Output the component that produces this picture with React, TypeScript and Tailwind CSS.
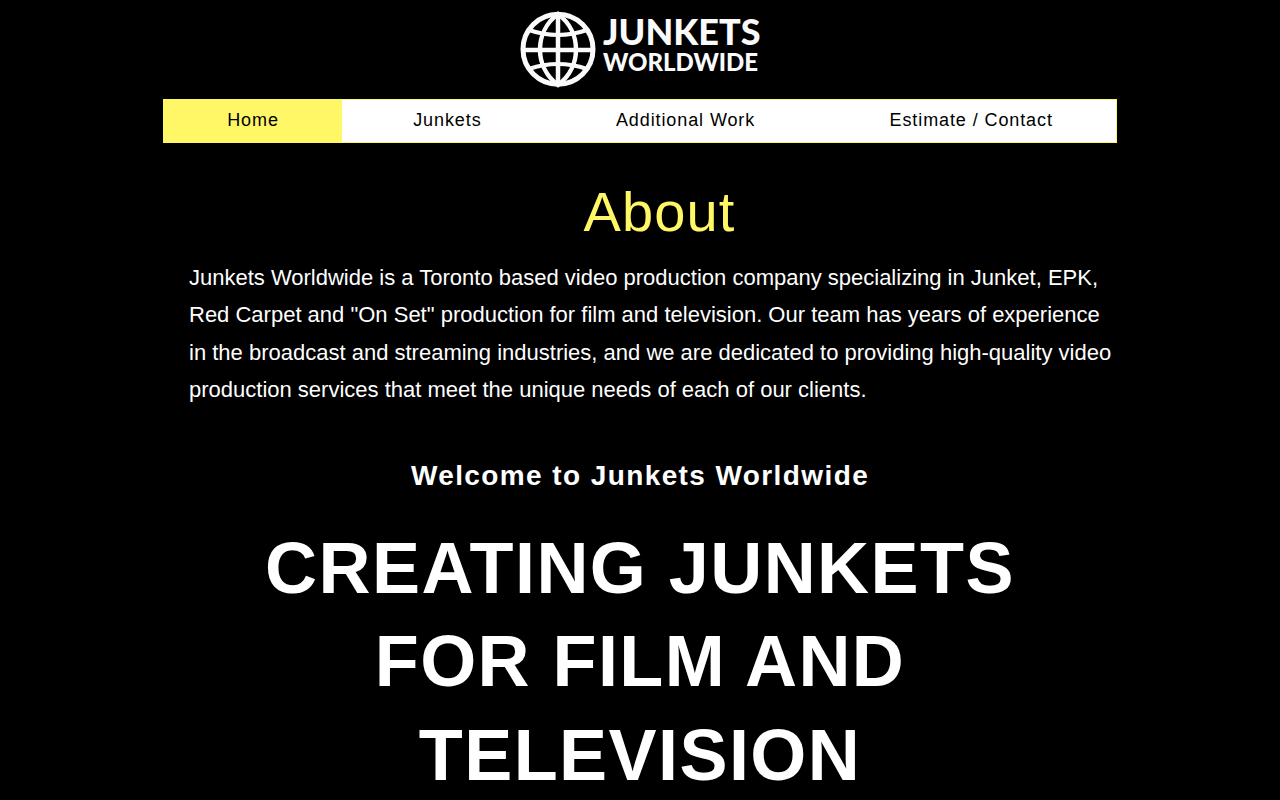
import React from 'react';

const navItems = [
  { label: 'Home', href: '#home', active: true },
  { label: 'Junkets', href: '#junkets', active: false },
  { label: 'Additional Work', href: '#additional-work', active: false },
  { label: 'Estimate / Contact', href: '#contact', active: false },
];

const Logo: React.FC = () => (
  <svg viewBox="0 0 244 99" className="h-[99px] w-[244px]" role="img" aria-label="Junkets Worldwide">
    <g fill="none" stroke="#fafafa" strokeWidth="4.5">
      <circle cx="40" cy="49.3" r="35" strokeWidth="5" />
      <path d="M40 14C16 32 16 67 40 85C64 67 64 32 40 14Z" />
      <path d="M40 14V85M5 50H75" />
      <path d="M11 30Q40 40 69 30M11 69Q40 59 69 69" strokeWidth="4" />
    </g>
    <g fill="#fafafa" fontFamily="Lato, sans-serif" fontWeight="900">
      <text x="85" y="45" fontSize="36">JUNKETS</text>
      <text x="85" y="71" fontSize="24">WORLDWIDE</text>
    </g>
  </svg>
);

const App: React.FC = () => {
  return (
    <div className="min-h-screen bg-black text-white font-['Liberation_Sans',Arial,sans-serif]">
      <header className="mx-auto max-w-[954px]">
        <a href="#home" className="flex justify-center">
          <Logo />
        </a>
        <nav className="flex h-11 gap-2 border border-[#fff766] bg-white text-lg tracking-wider text-black">
          {navItems.map((item) => (
            <a
              key={item.label}
              href={item.href}
              className={`flex flex-auto items-center justify-center pb-0.5 ${item.active ? 'bg-[#fff766]' : ''}`}
            >
              {item.label}
            </a>
          ))}
        </nav>
      </header>

      <main className="mx-auto max-w-[980px]">
        <section className="pt-9 pl-[39px]">
          <h1 className="text-center text-[56px] leading-[66px] tracking-[0.02em] text-[#fff766]">About</h1>
          <p className="mt-3.5 pr-3 text-[22px] leading-[1.7]">
            Junkets Worldwide is a Toronto based video production company specializing in Junket, EPK, Red Carpet and "On
            Set" production for film and television. Our team has years of experience in the broadcast and streaming
            industries, and we are dedicated to providing high-quality video production services that meet the unique
            needs of each of our clients.
          </p>
        </section>

        <section className="pt-[47px] text-center font-bold">
          <h2 className="text-[28px] leading-10 tracking-wider">Welcome to Junkets Worldwide</h2>
          <p className="mx-auto mt-[26px] max-w-[800px] text-7xl leading-[1.3] tracking-[0.02em]">
            CREATING JUNKETS FOR FILM AND TELEVISION
          </p>
        </section>
      </main>
    </div>
  );
};

export default App;
